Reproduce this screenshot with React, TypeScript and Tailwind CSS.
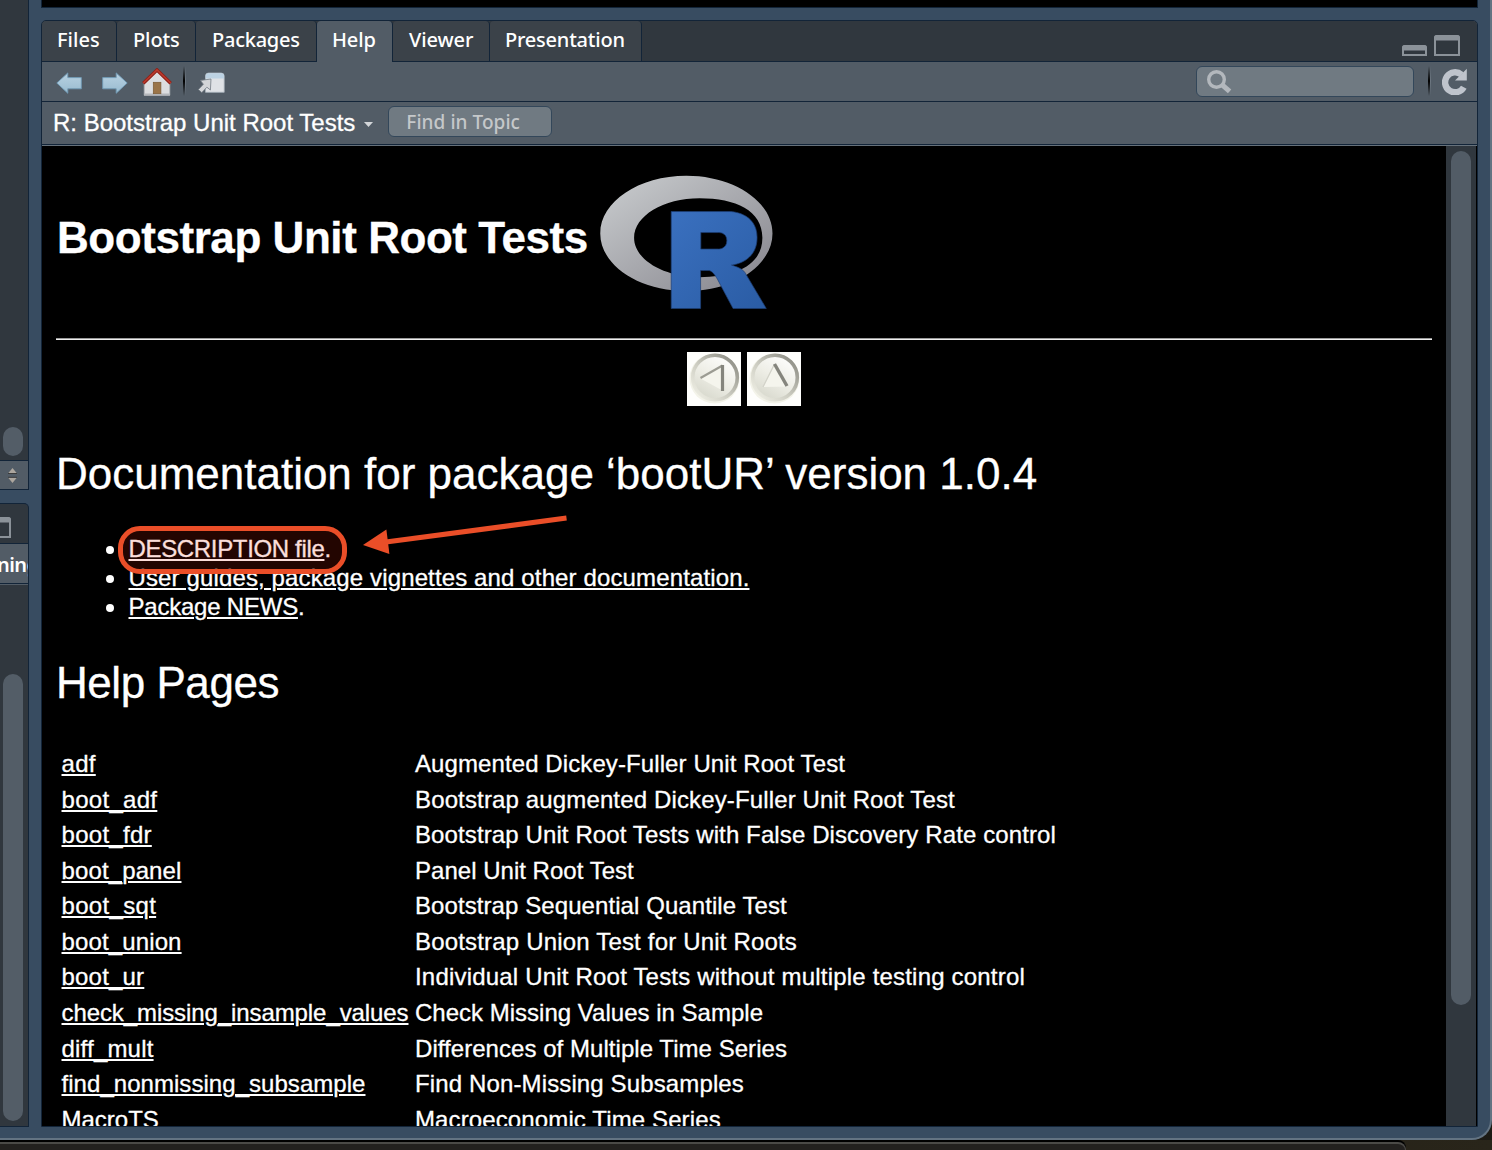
import type { ReactNode } from "react";

const tabs: { label: string; width: string; pad: string; tracking: string; active?: boolean }[] = [
  { label: "Files", width: "w-[75px]", pad: "pl-[15px]", tracking: "tracking-[0.05px]" },
  { label: "Plots", width: "w-[79px]", pad: "pl-[16px]", tracking: "tracking-[-0.1px]" },
  { label: "Packages", width: "w-[121px]", pad: "pl-[16px]", tracking: "tracking-[-0.25px]" },
  { label: "Help", width: "w-[76px]", pad: "pl-[15px]", tracking: "tracking-[-0.1px]", active: true },
  { label: "Viewer", width: "w-[97px]", pad: "pl-[16px]", tracking: "tracking-[-0.1px]" },
  { label: "Presentation", width: "w-[152px]", pad: "pl-[15px]", tracking: "tracking-[-0.22px]" },
];

const pages: { name: string; ls: string; text: string; ts: string }[] = [
  { name: "adf", ls: "tracking-[0.3px]", text: "Augmented Dickey-Fuller Unit Root Test", ts: "tracking-[0.095px]" },
  { name: "boot_adf", ls: "tracking-[0.3px]", text: "Bootstrap augmented Dickey-Fuller Unit Root Test", ts: "tracking-[0.14px]" },
  { name: "boot_fdr", ls: "tracking-[0.28px]", text: "Bootstrap Unit Root Tests with False Discovery Rate control", ts: "tracking-[0.11px]" },
  { name: "boot_panel", ls: "tracking-[0.12px]", text: "Panel Unit Root Test", ts: "tracking-[0.02px]" },
  { name: "boot_sqt", ls: "tracking-[0.32px]", text: "Bootstrap Sequential Quantile Test", ts: "tracking-[0.08px]" },
  { name: "boot_union", ls: "tracking-[0.13px]", text: "Bootstrap Union Test for Unit Roots", ts: "tracking-[0.18px]" },
  { name: "boot_ur", ls: "tracking-[0.2px]", text: "Individual Unit Root Tests without multiple testing control", ts: "tracking-[0.194px]" },
  { name: "check_missing_insample_values", ls: "tracking-[-0.087px]", text: "Check Missing Values in Sample", ts: "tracking-[0.01px]" },
  { name: "diff_mult", ls: "tracking-[0.2px]", text: "Differences of Multiple Time Series", ts: "tracking-[0.046px]" },
  { name: "find_nonmissing_subsample", ls: "tracking-[0.046px]", text: "Find Non-Missing Subsamples", ts: "tracking-[0.13px]" },
  { name: "MacroTS", ls: "tracking-[0px]", text: "Macroeconomic Time Series", ts: "tracking-[0.12px]" },
];

function Link({ children, className = "" }: { children: ReactNode; className?: string }) {
  return <a className={"underline decoration-2 underline-offset-[2px] " + className}>{children}</a>;
}

function MaximizeIcon() {
  return (
    <svg width="26" height="21" viewBox="0 0 26 21" className="shrink-0">
      <path d="M1 20V3Q1 1 3 1H23Q25 1 25 3V20Z" fill="none" stroke="#8b9299" strokeWidth="2" />
      <path d="M0 5.5V3Q0 0 3 0H23Q26 0 26 3V5.5Z" fill="#8b9299" />
    </svg>
  );
}

function MinimizeIcon() {
  return (
    <svg width="25" height="11" viewBox="0 0 25 11">
      <path d="M1 10V3Q1 1 3 1H22Q24 1 24 3V10Z" fill="none" stroke="#8b9299" strokeWidth="2" />
      <path d="M0 5.5V3Q0 0 3 0H22Q25 0 25 3V5.5Z" fill="#8b9299" />
    </svg>
  );
}

function Separator() {
  return (
    <div className="flex h-[30px]">
      <div className="w-[2px] bg-linear-to-b from-transparent via-black to-transparent" />
      <div className="w-px bg-linear-to-b from-transparent via-[#6d7781] to-transparent" />
    </div>
  );
}

function ArrowIcon({ flip = false }: { flip?: boolean }) {
  return (
    <svg width="26" height="22" viewBox="0 0 26 22" className={flip ? "-scale-x-100" : ""}>
      <defs>
        <linearGradient id={flip ? "arF" : "arB"} x1="0" y1="0" x2="0" y2="1">
          <stop offset="0" stopColor="#b9d2e2" />
          <stop offset="1" stopColor="#98bbd0" />
        </linearGradient>
      </defs>
      <path d="M.8 11 11.8 .9V5.6H25.3V16.8H11.8V21.3Z" fill={flip ? "url(#arF)" : "url(#arB)"} stroke="#6f9ab5" strokeWidth=".9" />
    </svg>
  );
}

function HomeIcon() {
  return (
    <svg width="30" height="28" viewBox="0 0 30 28">
      <path d="M2.2 27.3V13.5L15 2 27.8 13.5V27.3Z" fill="#dcdddf" stroke="#a9adb2" strokeWidth=".8" />
      <path d="M2 25.5H28V27.6H2Z" fill="#b5b8bc" />
      <rect x="11.3" y="14.3" width="7.6" height="11.4" fill="#9a7448" stroke="#7a5a34" strokeWidth=".7" />
      <path d="M1.3 15.2 15 2 28.7 15.2" fill="none" stroke="#8e1f17" strokeWidth="3.4" />
      <path d="M1.3 15 15 1.9 28.7 15" fill="none" stroke="#b93a2c" strokeWidth="1.7" />
    </svg>
  );
}

function PopoutIcon() {
  return (
    <svg width="27" height="22" viewBox="0 0 27 22">
      <path d="M7.5 20.3V4Q7.5 1 10.5 1H23.2Q26.2 1 26.2 4V20.3Z" fill="#dfe2e6" stroke="#aab4bd" strokeWidth=".8" />
      <path d="M7.7 6.4V4Q7.7 1.2 10.5 1.2H23.2Q26 1.2 26 4V6.4Z" fill="#bcd2e3" />
      <path d="M.4 17.6 5.4 12.2 2.4 8.4 13 7 12.4 18 8.9 15.2 3.8 20.6Z" fill="#d3d5d8" stroke="#737c85" strokeWidth=".8" />
    </svg>
  );
}

function RLogo() {
  return (
    <svg width="173" height="134" viewBox="0 0 724 561">
      <defs>
        <linearGradient id="ring" x1="0" y1="0" x2="1" y2="1">
          <stop offset="0" stopColor="#cbced0" />
          <stop offset="1" stopColor="#84838b" />
        </linearGradient>
        <linearGradient id="blue" x1="0" y1="0" x2="1" y2="1">
          <stop offset="0" stopColor="#3a70bf" />
          <stop offset="1" stopColor="#2a5ca4" />
        </linearGradient>
      </defs>
      <path fill="url(#ring)" fillRule="evenodd" d="M361.453,485.937C162.329,485.937,.906,377.828,.906,244.469C.906,111.109,162.329,2.999,361.453,2.999C560.578,2.999,722,111.109,722,244.469C722,377.828,560.578,485.937,361.453,485.937ZM416.641,97.406C265.289,97.406,142.594,171.314,142.594,262.484C142.594,353.654,265.289,427.562,416.641,427.562C567.992,427.562,679.687,377.033,679.687,262.484C679.687,147.971,567.992,97.406,416.641,97.406Z" />
      <path fill="url(#blue)" stroke="#1d3f75" strokeWidth="3" fillRule="evenodd" d="M550,377C550,377,571.822,383.585,584.5,390C588.899,392.226,596.51,396.668,602,402.5C607.378,408.212,610,414,610,414L696,559L557,559.062L492,437C492,437,478.687,414.131,470.5,407.5C463.668,401.969,460.755,400,454,400C449.298,400,420.974,400,420.974,400L421,558.974L298,559.026L298,152.938L545,152.938C545,152.938,657.5,154.967,657.5,262C657.5,369.033,550,377,550,377ZM496.5,241.024L422.037,240.976L422,310.026L496.5,310.002C496.5,310.002,531,309.895,531,274.877C531,239.155,496.5,241.024,496.5,241.024Z" />
    </svg>
  );
}

function NavButton({ up = false }: { up?: boolean }) {
  const id = up ? "up" : "left";
  return (
    <svg width="54" height="54" viewBox="0 0 54 54" className="bg-[#fefefc]">
      <defs>
        <linearGradient id={id + "Face"} x1="0.2" y1="1" x2="0.8" y2="0">
          <stop offset="0" stopColor="#d5d6ca" />
          <stop offset=".5" stopColor="#eeeee6" />
          <stop offset="1" stopColor="#ffffff" />
        </linearGradient>
        <linearGradient id={id + "Rim"} x1="0" y1="1" x2="1" y2="0">
          <stop offset="0" stopColor="#f4f4ea" />
          <stop offset=".45" stopColor="#cdcdc2" />
          <stop offset="1" stopColor="#84847c" />
        </linearGradient>
        <filter id={id + "Soft"}><feGaussianBlur stdDeviation=".7" /></filter>
      </defs>
      <g filter={`url(#${id}Soft)`}>
        <circle cx="27.5" cy="26.5" r="25" fill="#f3f3e9" />
        <circle cx="28" cy="25.5" r="22.3" fill={`url(#${id}Face)`} stroke={`url(#${id}Rim)`} strokeWidth="3.6" />
        {up ? (
          <>
            <path d="M16 35 27.5 12 40 34.5Z" fill="#f5f5ed" />
            <path d="M16 35 27.5 12" stroke="#d2d2c8" strokeWidth="1.3" />
            <path d="M27.5 12 40 34" stroke="#85857d" strokeWidth="3.4" />
          </>
        ) : (
          <>
            <path d="M13.5 26.5 35.5 14V38.5Z" fill="#f5f5ed" />
            <path d="M13.5 26 35.5 13.5" stroke="#9c9c93" strokeWidth="2.2" />
            <path d="M35.5 13V39" stroke="#85857d" strokeWidth="3.2" />
          </>
        )}
      </g>
    </svg>
  );
}

function LeftColumn() {
  return (
    <div className="flex h-[1127px] w-[29px] shrink-0 flex-col font-['Noto_Sans',sans-serif]">
      <div className="flex h-[490px] flex-col border-r border-b border-[#122438] bg-[#30373e]">
        <div className="flex h-[460px] items-end pb-[4px] pl-[3px]">
          <div className="h-[29px] w-5 rounded-full bg-[#535d67]" />
        </div>
        <div className="flex flex-1 items-center border-t border-[#122438] bg-[#525c66] pl-[8px]">
          <svg width="9" height="15" viewBox="0 0 9 15">
            <path d="M0 5.5 4.5 0 9 5.5Z" fill="#aca69e" />
            <path d="M0 9.5 4.5 15 9 9.5Z" fill="#aca69e" />
            <path d="M0 5.5H9M0 9.3H9" stroke="#333" strokeWidth=".9" />
          </svg>
        </div>
      </div>
      <div className="mt-[13px] flex h-[624px] flex-col overflow-hidden rounded-tr-[5px] border border-l-0 border-[#122438] bg-[#30373e]">
        <div className="flex h-[40px] justify-end border-b border-[#122438] pt-[13px] pr-[17px]">
          <MaximizeIcon />
        </div>
        <div className="flex h-[39px] overflow-hidden bg-[#525c66]">
          <span className="-ml-[3px] text-[20px] leading-[41px] font-semibold tracking-[-0.6px] whitespace-nowrap text-white">ning</span>
        </div>
        <div className="h-[2px] border-t border-b border-t-[#122438] border-b-[#525c66]" />
        <div className="flex flex-1 items-end pb-[5px] pl-[3px]">
          <div className="h-[447px] w-5 rounded-full bg-[#535d67]" />
        </div>
      </div>
    </div>
  );
}

function HelpContent() {
  return (
    <div className="relative h-full w-[1404px] overflow-hidden bg-black px-[14px] pt-[29px] font-['Liberation_Sans',Arial,sans-serif] text-[24px] text-white [-webkit-text-stroke:0.3px]">
      <div className="flex h-[135px]">
        <h1 className="w-[544px] pt-[38px] pl-px text-[44px] leading-[50px] font-bold tracking-[-0.44px] whitespace-nowrap">Bootstrap Unit Root Tests</h1>
        <RLogo />
      </div>
      <div className="mt-[28px] h-[2px] border-t border-b border-t-[#9a9a9a] border-b-[#eeeeee]" />
      <div className="mt-[12px] flex h-[54px] justify-center gap-[6px]">
        <NavButton />
        <NavButton up />
      </div>
      <h2 className="mt-[43px] text-[44px] leading-[50px] tracking-[-0.01px] whitespace-nowrap">Documentation for package ‘bootUR’ version 1.0.4</h2>
      <ul className="mt-[35px] leading-[29px] whitespace-nowrap">
        {[
          <><Link className="tracking-[-0.34px]">DESCRIPTION file</Link>.</>,
          <Link className="tracking-[0.132px]">User guides, package vignettes and other documentation.</Link>,
          <><Link className="tracking-[-0.22px]">Package NEWS</Link>.</>,
        ].map((item, i) => (
          <li key={i} className="flex items-center pl-[50px]">
            <span className="mt-[2px] mr-[14.5px] size-2 rounded-full bg-white" />
            <span>{item}</span>
          </li>
        ))}
      </ul>
      <div className="absolute top-[380px] left-[75.5px] h-[48px] w-[229.5px] rounded-[22px] border-5 border-[#ea4e28] bg-[#ea2408]/15 bg-clip-padding" />
      <svg className="absolute top-[366px] left-[318px]" width="212" height="48" viewBox="360 512 212 48">
        <path d="M566.5 518 386 542" stroke="#ea4e28" strokeWidth="5.2" />
        <path d="M363 545 386.4 529.5 389.4 554Z" fill="#ea4e28" />
      </svg>
      <h2 className="mt-[37px] text-[44px] leading-[50px] tracking-[-0.45px]">Help Pages</h2>
      <div className="mt-[38px] pl-[5.5px] leading-[35.57px] whitespace-nowrap">
        {pages.map((p) => (
          <div key={p.name} className="flex h-[35.57px]">
            <div className="w-[353.5px]"><Link className={p.ls}>{p.name}</Link></div>
            <div className={p.ts}>{p.text}</div>
          </div>
        ))}
      </div>
    </div>
  );
}

export default function App() {
  return (
    <div className="relative h-[1150px] w-[1492px] overflow-hidden bg-[#1c1a14]">
      <div className="flex h-[1140px] w-[1492px] overflow-hidden rounded-br-[20px] border-r-2 border-b-2 border-[#637382] bg-[#384c61]">
        <LeftColumn />
        <div className="ml-[12px] flex w-[1437px] shrink-0 flex-col">
          <div className="h-[8px] border border-t-0 border-[#122438] bg-black" />
          <div className="mt-[12px] flex h-[1107px] flex-col overflow-hidden rounded-t-[5px] border border-[#122438] bg-[#525c66]">
            <div className="flex h-[41px] shrink-0 bg-[#30373e] font-['Noto_Sans',sans-serif] text-[20px] font-medium text-white">
              {tabs.map((t) => (
                <div key={t.label} className={"rounded-t-[4px] border-r border-[#122438] leading-[38px] whitespace-nowrap " + t.width + " " + t.pad + " " + t.tracking + (t.active ? " bg-[#525c66]" : " border-b bg-[#3b4249]")}>
                  {t.label}
                </div>
              ))}
              <div className="flex flex-1 items-end justify-end gap-[7px] border-b border-[#122438] pr-[17px] pb-[5px]">
                <MinimizeIcon />
                <MaximizeIcon />
              </div>
            </div>
            <div className="flex h-[40px] shrink-0 items-center border-b border-[#122438] pl-[14px]">
              <div className="mt-[3px]"><ArrowIcon /></div>
              <div className="mt-[3px] ml-[20px]"><ArrowIcon flip /></div>
              <div className="mt-px ml-[14px]"><HomeIcon /></div>
              <div className="-mt-[2px] ml-[11px]"><Separator /></div>
              <div className="mt-[3px] ml-[12px]"><PopoutIcon /></div>
              <div className="ml-auto flex h-[31px] w-[218px] items-center rounded-[6px] border border-[#33475a] bg-[#707a82] pl-[10px]">
                <svg width="25" height="24" viewBox="0 0 25 24">
                  <circle cx="9.5" cy="9.5" r="7.8" fill="none" stroke="#b3b8bd" strokeWidth="3.4" />
                  <path d="M15.2 14.8 22.6 21.4" stroke="#b3b8bd" strokeWidth="5" />
                </svg>
              </div>
              <div className="-mt-[2px] ml-[14px]"><Separator /></div>
              <svg className="-mt-px mr-[9px] ml-[11px]" width="26" height="27" viewBox="0 0 26 27">
                <path d="M21.8 19.2A10 10 0 1 1 19.5 6.6" fill="none" stroke="#bfc4cc" strokeWidth="6.4" />
                <path d="M24.8 .8V12.4H13Z" fill="#bfc4cc" />
              </svg>
            </div>
            <div className="flex h-[43px] shrink-0 items-center border-b border-[#122438] pl-[11px]">
              <span className="font-['Liberation_Sans',Arial,sans-serif] text-[24px] leading-[42px] whitespace-nowrap text-white [-webkit-text-stroke:0.3px]">R: Bootstrap Unit Root Tests</span>
              <svg className="mt-[2px] ml-[9px]" width="9" height="5" viewBox="0 0 9 5"><path d="M0 0H9L4.5 5Z" fill="#d3d6d9" /></svg>
              <div className="-mt-[3px] ml-[15px] h-[31px] w-[164px] rounded-[6px] border border-[#33475a] bg-[#707a82] pl-[17px] font-['Noto_Sans',sans-serif] text-[19px] leading-[30px] font-medium tracking-[0.05px] whitespace-nowrap text-[#c5c8ca]">Find in Topic</div>
            </div>
            <div className="flex min-h-0 flex-1 border-t border-[#66717b] bg-black">
              <HelpContent />
              <div className="w-[30px] bg-[#30373e] pt-[5px] pl-[5px]">
                <div className="h-[854px] w-5 rounded-full bg-[#525c66]" />
              </div>
            </div>
          </div>
        </div>
      </div>
      <div className="flex h-[10px] bg-linear-to-r from-[#15130e] to-[#29251a]">
        <div className="mt-[2px] h-[8px] w-[1406px] rounded-tr-[14px] border-t-2 border-r border-[#4b4a47] bg-[#23211f] shadow-[0_-2px_0_#000]" />
      </div>
    </div>
  );
}
